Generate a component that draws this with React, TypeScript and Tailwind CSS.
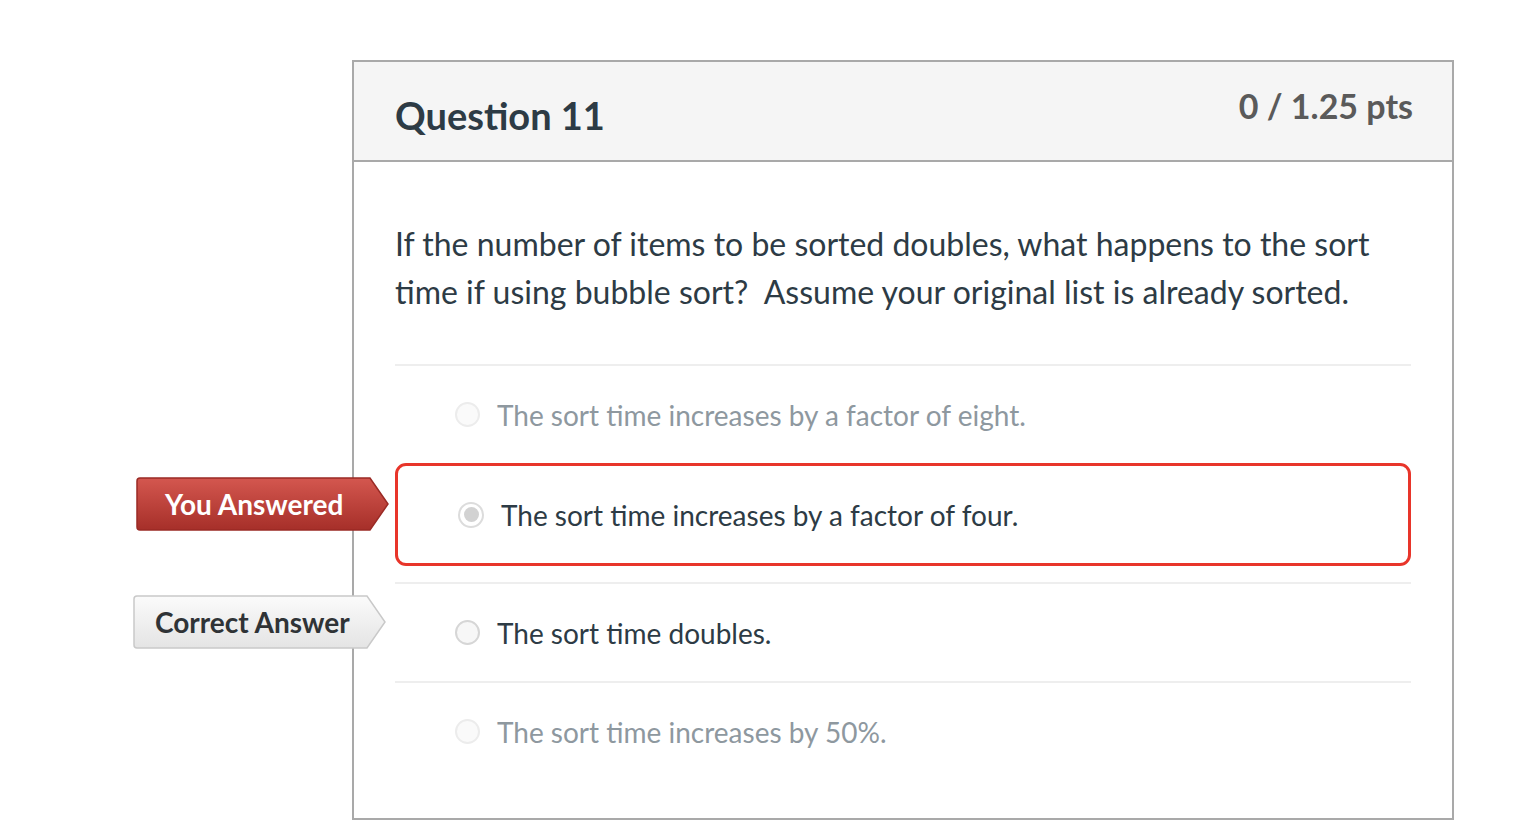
const answers = [
  { text: "The sort time increases by a factor of eight.", state: "faded" },
  { text: "The sort time increases by a factor of four.", state: "wrong" },
  { text: "The sort time doubles.", state: "correct" },
  { text: "The sort time increases by 50%.", state: "faded" },
];

function Badge({ label, red }: { label: string; red?: boolean }) {
  const id = red ? "badge-red" : "badge-gray";
  return (
    <div
      className={`absolute h-[54px] w-[254px] ${
        red ? "left-[-259px] top-[14px]" : "left-[-262px] top-[11px]"
      }`}
    >
      <svg className="absolute inset-0" width="254" height="54" viewBox="0 0 254 54">
        <defs>
          <linearGradient id={id} x1="0" y1="0" x2="0" y2="1">
            <stop offset="0" stopColor={red ? "#d4574f" : "#fbfbfb"} />
            <stop offset="1" stopColor={red ? "#a62f29" : "#e4e4e4"} />
          </linearGradient>
        </defs>
        <path
          d="M4 1 H234 L252 27 L234 53 H4 Q1 53 1 50 V4 Q1 1 4 1 Z"
          fill={`url(#${id})`}
          stroke={red ? "#9a2a25" : "#c9c9c9"}
          strokeWidth="1.5"
        />
      </svg>
      <div
        className={`relative flex h-full items-center text-[28px] font-bold ${
          red ? "pl-[29px] text-white" : "pl-[22px] text-[#2f3336]"
        }`}
      >
        {label}
      </div>
    </div>
  );
}

function Radio({ state }: { state: string }) {
  if (state === "wrong") {
    return (
      <span className="flex h-[26px] w-[26px] shrink-0 items-center justify-center rounded-full border-2 border-[#dcdcdc] bg-white">
        <span className="h-[15px] w-[15px] rounded-full bg-[#d2d2d2]" />
      </span>
    );
  }
  return (
    <span
      className={`h-[25px] w-[25px] shrink-0 rounded-full border-2 ${
        state === "faded" ? "border-[#ececec] bg-[#fafafa]" : "border-[#d6d6d6] bg-[#f7f7f7]"
      }`}
    />
  );
}

export default function App() {
  return (
    <div className="min-h-[826px] bg-white pl-[352px] pt-[60px] font-['Lato',sans-serif]">
      <div className="w-[1102px] border-2 border-[#a9a9a9] bg-white">
        <div className="flex h-[100px] items-start justify-between border-b-2 border-[#a9a9a9] bg-[#f5f5f5] pl-[41px] pr-[39px]">
          <h2 className="mt-[30px] text-[38px] font-bold leading-[46px] text-[#2d3b45]">Question 11</h2>
          <div className="mt-[23px] text-[34px] font-bold leading-[42px] text-[#5a5a5a]">0 / 1.25 pts</div>
        </div>

        <div className="px-[41px] pb-[38px]">
          <p className="border-b-2 border-[#eeeeee] pt-[58px] pb-[48px] text-[32px] leading-[48px] text-[#2d3b45]">
            If the number of items to be sorted doubles, what happens to the sort time if using bubble sort?&nbsp; Assume your original list is already sorted.
          </p>

          {answers.map((a, i) => {
            if (a.state === "wrong") {
              return (
                <div key={i} className="relative mb-[16px]">
                  <Badge label="You Answered" red />
                  <div className="flex h-[103px] items-center gap-[17px] rounded-[11px] border-[3px] border-[#e8352a] pl-[60px]">
                    <Radio state={a.state} />
                    <span className="text-[28px] text-[#2d3b45]">{a.text}</span>
                  </div>
                </div>
              );
            }
            return (
              <div
                key={i}
                className={`relative flex items-center gap-[17px] pl-[60px] ${
                  i > 1 ? "h-[99px] border-t-2 border-[#eeeeee]" : "h-[97px]"
                }`}
              >
                {a.state === "correct" && <Badge label="Correct Answer" />}
                <Radio state={a.state} />
                <span
                  className={`text-[28px] ${
                    a.state === "faded" ? "text-[#8e989f]" : "text-[#2d3b45]"
                  }`}
                >
                  {a.text}
                </span>
              </div>
            );
          })}
        </div>
      </div>
    </div>
  );
}
